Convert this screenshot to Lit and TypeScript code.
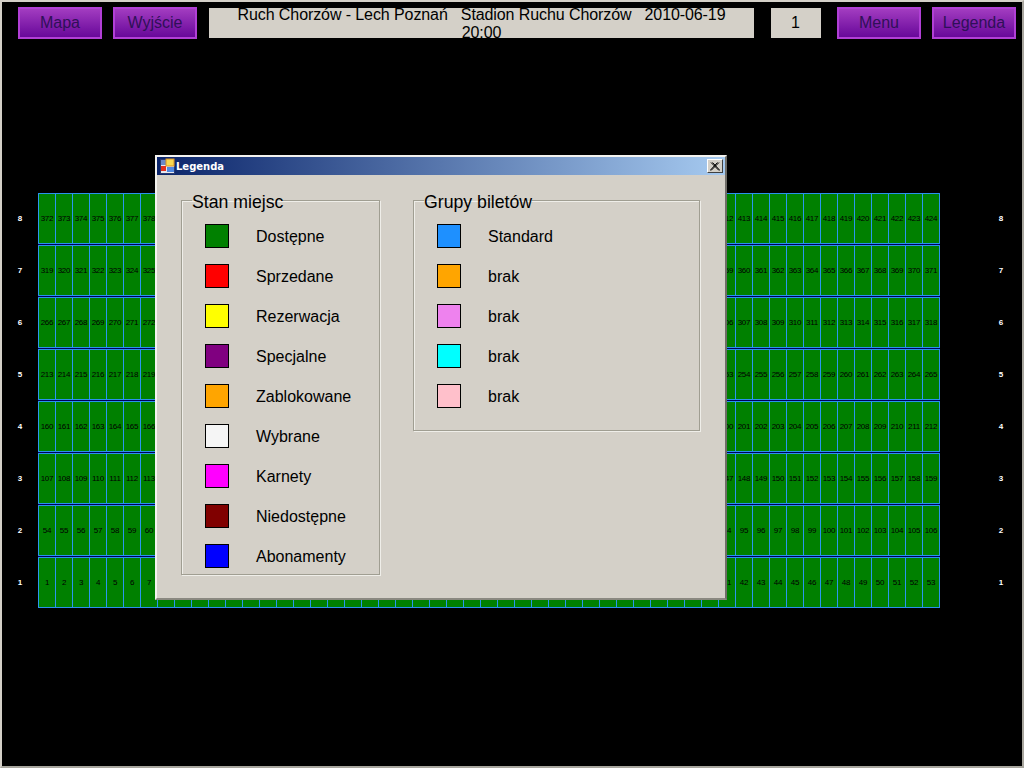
import { LitElement, html, css } from "lit";
import { customElement } from "lit/decorators.js";

const STATES: [string, string][] = [
  ["#008000", "Dostępne"],
  ["#ff0000", "Sprzedane"],
  ["#ffff00", "Rezerwacja"],
  ["#800080", "Specjalne"],
  ["#ffa500", "Zablokowane"],
  ["#f5f5f5", "Wybrane"],
  ["#ff00ff", "Karnety"],
  ["#800000", "Niedostępne"],
  ["#0000ff", "Abonamenty"],
];
const GROUPS: [string, string][] = [
  ["#1e90ff", "Standard"],
  ["#ffa500", "brak"],
  ["#ee82ee", "brak"],
  ["#00ffff", "brak"],
  ["#ffc0cb", "brak"],
];
const ROWS = [8, 7, 6, 5, 4, 3, 2, 1];
const PER_ROW = 53;

@customElement("app-root")
export class AppRoot extends LitElement {
  static styles = css`
    :host {
      display: block;
      position: relative;
      width: 1024px;
      height: 768px;
      box-sizing: border-box;
      background: #000;
      border: 2px solid #d4d0c8;
      border-right-color: #a8a69e;
      border-bottom-color: #a8a69e;
      font-family: "Liberation Sans", Arial, sans-serif;
      overflow: hidden;
    }
    .top {
      display: flex;
      align-items: center;
      height: 32px;
      margin-top: 5px;
      padding-left: 16px;
    }
    .btn {
      width: 84px;
      height: 32px;
      box-sizing: border-box;
      flex: none;
      display: flex;
      align-items: center;
      justify-content: center;
      border: 2px solid #b13fd6;
      background: linear-gradient(#a23cc0, #68089a);
      color: #2f1058;
      font-size: 16px;
      padding-bottom: 1px;
    }
    .g11 { margin-left: 11px; }
    .title {
      flex: none;
      width: 545px;
      height: 30px;
      box-sizing: border-box;
      margin-left: 12px;
      padding: 0 20px;
      background: #d4d0c8;
      color: #000;
      font-size: 16px;
      line-height: 18px;
      letter-spacing: -0.09px;
      text-align: center;
      white-space: pre-wrap;
    }
    .title span { display: block; margin-top: -2px; }
    .page {
      flex: none;
      width: 50px;
      height: 30px;
      box-sizing: border-box;
      padding-right: 1px;
      margin-left: 17px;
      background: #d4d0c8;
      color: #000;
      font-size: 16px;
      display: flex;
      align-items: center;
      justify-content: center;
    }
    .g16 { margin-left: 16px; }
    .map {
      display: flex;
      flex-direction: column;
      gap: 1px;
      margin-top: 154px;
    }
    .row {
      display: flex;
      align-items: stretch;
      height: 51px;
    }
    .lab {
      box-sizing: border-box;
      display: flex;
      align-items: center;
      justify-content: center;
      color: #fff;
      font-size: 8px;
      font-weight: bold;
    }
    .lab.l { width: 36px; padding-right: 0; }
    .lab.r { width: 82px; padding-left: 40px; }
    .seats {
      display: grid;
      grid-template-columns: repeat(53, 17px);
      width: 902px;
      box-sizing: border-box;
      border: solid #2a92ec;
      border-width: 1px 1px 1px 0;
      background: #008000;
    }
    .row + .row .seats { box-shadow: 0 -1px 0 #00005c; }
    .seat {
      border-left: 1px solid #2a96f0;
      display: flex;
      align-items: center;
      justify-content: center;
      color: #000;
      font-size: 8px;
      letter-spacing: -0.2px;
      overflow: hidden;
      white-space: nowrap;
    }
    .win {
      position: absolute;
      left: 153px;
      top: 153px;
      width: 572px;
      height: 445px;
      box-sizing: border-box;
      background: #d4d0c8;
      border: 2px solid;
      border-color: #f4f3ef #6f6d68 #8a8880 #f4f3ef;
      display: flex;
      flex-direction: column;
    }
    .bar {
      flex: none;
      height: 18px;
      display: flex;
      align-items: center;
      padding: 0 2px 0 3px;
      gap: 1px;
      background: linear-gradient(90deg, #0a246a, #a6caf0);
      color: #fff;
      font-family: "DejaVu Sans", sans-serif;
      font-weight: bold;
      font-size: 10px;
    }
    .bar svg { flex: none; display: block; }
    .x {
      margin-left: auto;
      width: 16px;
      height: 14px;
      flex: none;
      box-sizing: border-box;
      background: #d4d0c8;
      border: 1px solid;
      border-color: #fff #404040 #404040 #fff;
      display: flex;
      align-items: center;
      justify-content: center;
    }
    .body {
      display: flex;
      align-items: flex-start;
      padding: 17px 0 0 24px;
    }
    fieldset {
      margin: 0;
      box-sizing: border-box;
      border: 1px solid #a09e92;
      box-shadow: 1px 1px 0 #efeee9, inset 1px 1px 0 #efeee9;
      padding: 0;
    }
    legend {
      padding: 0;
      margin-left: 10px;
      font-size: 17.7px;
      line-height: 16px;
      color: #000;
      position: relative;
      top: 2px;
    }
    .states { width: 199px; height: 383px; }
    .groups { width: 287px; height: 239px; margin-left: 33px; }
    .items {
      display: flex;
      flex-direction: column;
      gap: 16px;
      padding: 16px 0 0 23px;
    }
    .item {
      display: flex;
      align-items: center;
      gap: 27px;
      height: 24px;
      font-size: 16px;
      color: #000;
    }
    .item span { padding-top: 2px; }
    .sw {
      width: 24px;
      height: 24px;
      box-sizing: border-box;
      border: 1px solid #000;
      flex: none;
    }
  `;

  private list(items: [string, string][]) {
    return html`<div class="items">
      ${items.map(
        ([c, t]) => html`<div class="item">
          <div class="sw" style="background:${c}"></div>
          <span>${t}</span>
        </div>`
      )}
    </div>`;
  }

  render() {
    return html`
      <div class="top">
        <div class="btn">Mapa</div>
        <div class="btn g11">Wyjście</div>
        <div class="title"><span>Ruch Chorzów - Lech Poznań   Stadion Ruchu Chorzów   2010-06-19 20:00</span></div>
        <div class="page">1</div>
        <div class="btn g16">Menu</div>
        <div class="btn g11">Legenda</div>
      </div>
      <div class="map">
        ${ROWS.map((r) => {
          const first = (r - 1) * PER_ROW + 1;
          return html`<div class="row">
            <div class="lab l">${r}</div>
            <div class="seats">
              ${Array.from(
                { length: PER_ROW },
                (_, i) => html`<div class="seat">${first + i}</div>`
              )}
            </div>
            <div class="lab r">${r}</div>
          </div>`;
        })}
      </div>
      <div class="win">
        <div class="bar">
          <svg width="15" height="16" viewBox="0 0 15 16">
            <rect x="0.5" y="1.5" width="14" height="14" fill="#e8e8f0" stroke="#2a3a70" />
            <rect x="1" y="2" width="5" height="5" fill="#6a88c8" />
            <rect x="6" y="1" width="8" height="7" fill="#f8d850" stroke="#d89020" />
            <rect x="1" y="8" width="5" height="5" fill="#e03020" />
            <rect x="7" y="9" width="7" height="5" fill="#5088e0" />
          </svg>
          <span>Legenda</span>
          <div class="x">
            <svg width="10" height="9" viewBox="0 0 10 9">
              <path d="M1 0.5 L9 8.5 M2.5 0.5 L10 8.5 M9 0.5 L1 8.5 M7.5 0.5 L0 8.5" stroke="#000" stroke-width="1" fill="none" />
            </svg>
          </div>
        </div>
        <div class="body">
          <fieldset class="states"><legend>Stan miejsc</legend>${this.list(STATES)}</fieldset>
          <fieldset class="groups"><legend>Grupy biletów</legend>${this.list(GROUPS)}</fieldset>
        </div>
      </div>
    `;
  }
}
